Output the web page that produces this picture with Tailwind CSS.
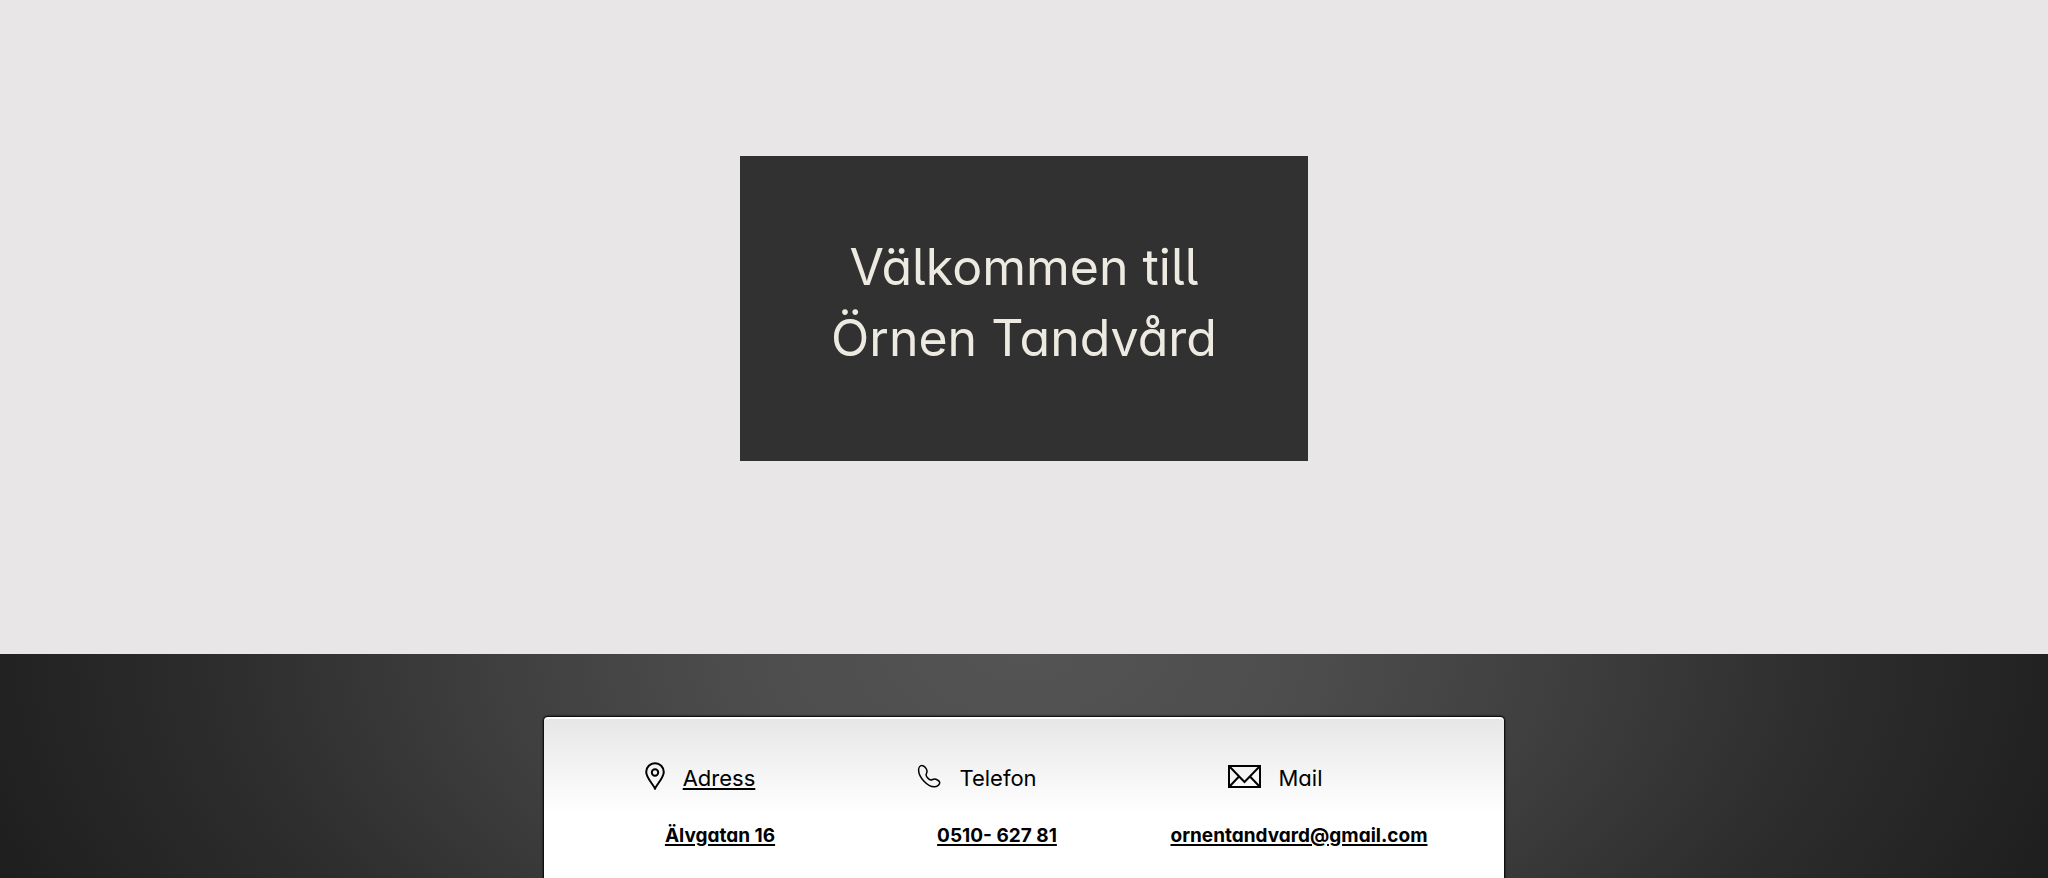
<!DOCTYPE html>
<html lang="sv">
<head>
  <meta charset="UTF-8" />
  <meta name="viewport" content="width=device-width, initial-scale=1" />
  <title>Örnen Tandvård</title>
  <script src="https://cdn.jsdelivr.net/npm/@tailwindcss/browser@4"></script>
</head>
<body class="min-h-screen flex flex-col bg-[#e8e6e7] font-[Inter,sans-serif] [font-feature-settings:'cv11'] text-black">
  <header class="flex justify-center px-4 pt-[156px] pb-[193px]">
    <div class="w-full max-w-[568px] bg-[#313131] pt-[76px] pb-[87px]">
      <h1 class="text-center text-[50px] leading-[71px] text-[#edeae1] [font-feature-settings:'cv11','cv05']">Välkommen till<br />Örnen Tandvård</h1>
    </div>
  </header>

  <main class="flex-1 flex flex-col items-center px-4 pt-[63px] bg-[radial-gradient(ellipse_1100px_600px_at_50%_0,#545454_0%,#4d4d4d_25%,#3f3f3f_48%,#2d2d2d_73%,#1e1e1e_100%)]">
    <section class="flex-1 w-full max-w-[960px] rounded-t-[4px] pl-10 pr-11 pt-11 pb-8 bg-white bg-linear-to-b from-[#e6e6e6] to-white to-[96px] shadow-[0_0_2px_1px_#000,inset_0_2px_0_#fff]">
      <div class="grid grid-cols-[272fr_282fr_322fr] text-center">
        <div>
          <h2 class="flex items-center justify-center gap-[18px] pr-10 text-[22px] leading-[34px]">
            <svg class="w-5 h-7 mb-1" viewBox="0 0 20 28" fill="none" stroke="#000" stroke-width="2" aria-hidden="true">
              <path d="M10 26.5C8.3 22.7 1.2 15.7 1.2 10a8.8 8.8 0 0 1 17.6 0c0 5.700-7.100 12.700-8.800 16.500Z" />
              <circle cx="10" cy="10.500" r="3.200" />
            </svg>
            <a href="#adress" class="underline decoration-2 underline-offset-2">Adress</a>
          </h2>
          <a href="#adress" class="inline-block mt-[27px] text-[19px] leading-7 font-bold underline decoration-2 underline-offset-2">Älvgatan 16</a>
        </div>
        <div>
          <h2 class="flex items-center justify-center gap-[18px] pr-10 text-[22px] leading-[34px]">
            <svg class="w-6 h-6 mb-1" viewBox="0 0 24 24" fill="none" stroke="#000" stroke-width="1.500" stroke-linejoin="round" aria-hidden="true">
              <path d="M4.800 1.500C3 1.500 1.600 3.500 1.600 6c0 7 8.500 16.500 15.800 16.800 2.600.1 5-1.800 5.300-3.900.2-1.500-1.700-2.800-3.800-3.700-2.400-1-3.500.9-5 .8-1.800-.1-4.700-3.200-4.800-5C9 9.500 10.300 8.800 10 6.800 9.600 4.400 7.200 1.500 4.800 1.500Z" />
            </svg>
            <span>Telefon</span>
          </h2>
          <a href="tel:051062781" class="inline-block mt-[27px] text-[19px] leading-7 font-bold underline decoration-2 underline-offset-2">0510- 627 81</a>
        </div>
        <div>
          <h2 class="flex items-center justify-center gap-[18px] pr-12 text-[22px] leading-[34px]">
            <svg class="w-[33px] h-[23px] mb-1" viewBox="0 0 33 23" fill="none" stroke="#000" stroke-width="2" aria-hidden="true">
              <rect x="1" y="1" width="31" height="21" />
              <path d="M1.500 1.500 16.500 17 31.500 1.500M1.500 21.500 11 11.500M31.500 21.500 22 11.500" />
            </svg>
            <span>Mail</span>
          </h2>
          <a href="mailto:ornentandvard@gmail.com" class="inline-block mt-[27px] text-[19px] leading-7 font-bold underline decoration-2 underline-offset-2">ornentandvard@gmail.com</a>
        </div>
      </div>
    </section>
  </main>
</body>
</html>
